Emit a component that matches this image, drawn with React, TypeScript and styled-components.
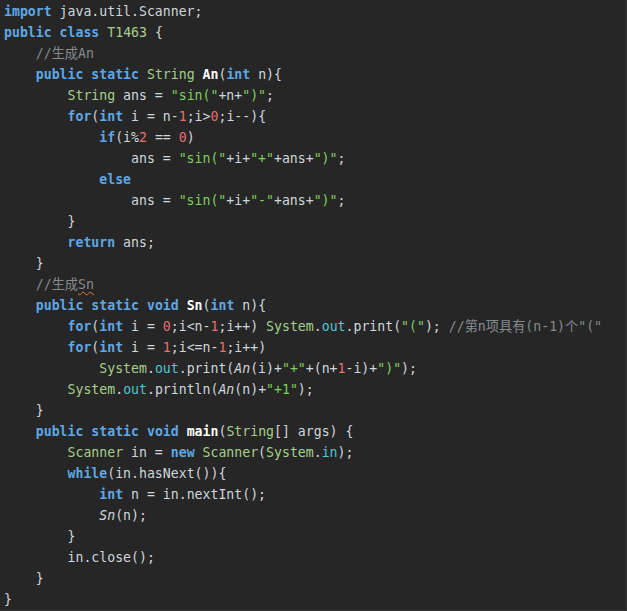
import React from "react";
import styled, { createGlobalStyle } from "styled-components";

const Global = createGlobalStyle`
  html, body { margin: 0; padding: 0; background: #262626; }
  #root { width: 627px; height: 611px; }
`;

const Editor = styled.div`
  box-sizing: border-box;
  width: 627px;
  height: 611px;
  background: #262626;
  padding: 1px 0 0 4px;
  font-family: "DejaVu Sans Mono", "Noto Sans CJK SC", monospace;
  font-size: 13.2px;
  color: #d0d6dc;
  overflow: hidden;
  border-right: 1px solid #333;
  border-bottom: 1px solid #333;
`;

const Line = styled.div`
  height: 21px;
  line-height: 21px;
  white-space: pre;
`;

type Kind = "kw" | "type" | "str" | "num" | "com" | "fn" | "call" | "field" | "plain";

const colors: Record<Kind, string> = {
  kw: "#5ea8e6",
  type: "#a7d08a",
  str: "#7fcf5f",
  num: "#e66f6f",
  com: "#858a8f",
  fn: "#ffffff",
  call: "#d0d6dc",
  field: "#4fc8d0",
  plain: "#d0d6dc",
};

const Tok = styled.span<{ $k: Kind }>`
  color: ${(p) => colors[p.$k]};
  font-weight: ${(p) => (p.$k === "kw" || p.$k === "fn" ? "bold" : "normal")};
  font-style: ${(p) => (p.$k === "call" ? "italic" : "normal")};
`;

const Squiggle = styled.span`
  text-decoration: underline wavy #e0803a;
  text-decoration-thickness: 1px;
  text-underline-offset: 2px;
`;

type T = [Kind, string];
const K = (s: string): T => ["kw", s];
const Ty = (s: string): T => ["type", s];
const S = (s: string): T => ["str", s];
const N = (s: string): T => ["num", s];
const C = (s: string): T => ["com", s];
const F = (s: string): T => ["fn", s];
const I = (s: string): T => ["call", s];
const Fd = (s: string): T => ["field", s];
const P = (s: string): T => ["plain", s];

const lines: (T[] | "sn")[] = [
  [K("import"), P(" java.util.Scanner;")],
  [K("public"), P(" "), K("class"), P(" "), Ty("T1463"), P(" {")],
  [C("    //生成An")],
  [P("    "), K("public"), P(" "), K("static"), P(" "), Ty("String"), P(" "), F("An"), P("("), K("int"), P(" n){")],
  [P("        "), Ty("String"), P(" ans = "), S("\"sin(\""), P("+n+"), S("\")\""), P(";")],
  [P("        "), K("for"), P("("), K("int"), P(" i = n-"), N("1"), P(";i>"), N("0"), P(";i--){")],
  [P("            "), K("if"), P("(i%"), N("2"), P(" == "), N("0"), P(")")],
  [P("                ans = "), S("\"sin(\""), P("+i+"), S("\"+\""), P("+ans+"), S("\")\""), P(";")],
  [P("            "), K("else")],
  [P("                ans = "), S("\"sin(\""), P("+i+"), S("\"-\""), P("+ans+"), S("\")\""), P(";")],
  [P("        }")],
  [P("        "), K("return"), P(" ans;")],
  [P("    }")],
  "sn",
  [P("    "), K("public"), P(" "), K("static"), P(" "), K("void"), P(" "), F("Sn"), P("("), K("int"), P(" n){")],
  [P("        "), K("for"), P("("), K("int"), P(" i = "), N("0"), P(";i<n-"), N("1"), P(";i++) "), Ty("System"), P("."), Fd("out"), P(".print("), S("\"(\""), P("); "), C("//第n项具有(n-1)个\"(\"")],
  [P("        "), K("for"), P("("), K("int"), P(" i = "), N("1"), P(";i<=n-"), N("1"), P(";i++)")],
  [P("            "), Ty("System"), P("."), Fd("out"), P(".print("), I("An"), P("(i)+"), S("\"+\""), P("+(n+"), N("1"), P("-i)+"), S("\")\""), P(");")],
  [P("        "), Ty("System"), P("."), Fd("out"), P(".println("), I("An"), P("(n)+"), S("\"+1\""), P(");")],
  [P("    }")],
  [P("    "), K("public"), P(" "), K("static"), P(" "), K("void"), P(" "), F("main"), P("("), Ty("String"), P("[] args) {")],
  [P("        "), Ty("Scanner"), P(" in = "), K("new"), P(" "), Ty("Scanner"), P("("), Ty("System"), P("."), Fd("in"), P(");")],
  [P("        "), K("while"), P("(in.hasNext()){")],
  [P("            "), K("int"), P(" n = in.nextInt();")],
  [P("            "), I("Sn"), P("(n);")],
  [P("        }")],
  [P("        in.close();")],
  [P("    }")],
  [P("}")],
];

export default function App() {
  return (
    <>
      <Global />
      <Editor>
        {lines.map((ln, i) =>
          ln === "sn" ? (
            <Line key={i}>
              <Tok $k="com">
                {"    //生成"}
                <Squiggle>Sn</Squiggle>
              </Tok>
            </Line>
          ) : (
            <Line key={i}>
              {ln.map(([k, s], j) => (
                <Tok key={j} $k={k}>
                  {s}
                </Tok>
              ))}
            </Line>
          )
        )}
      </Editor>
    </>
  );
}
